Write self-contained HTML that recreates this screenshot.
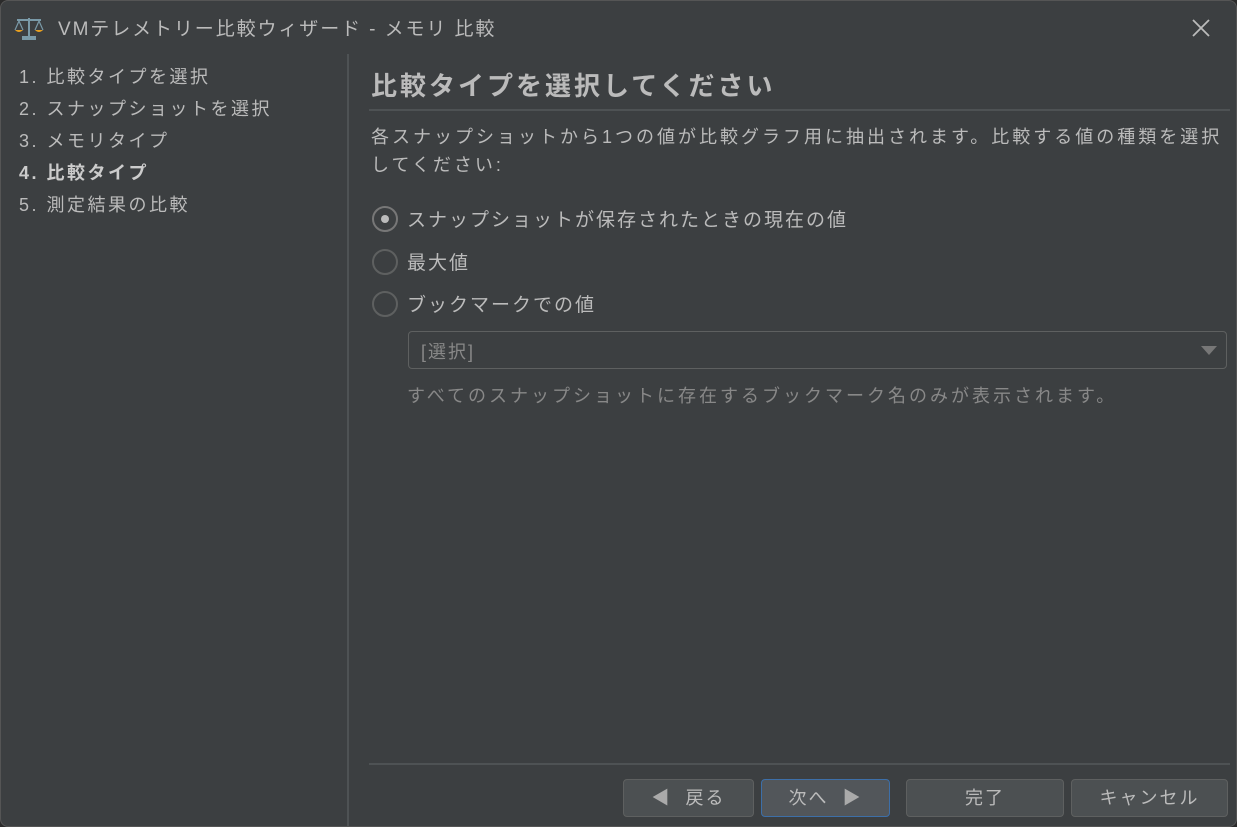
<!DOCTYPE html><html><head><meta charset="utf-8"><style>
*{margin:0;padding:0;box-sizing:border-box}
body{width:1237px;height:827px;background:#2b2b2b;font-family:"Liberation Sans","Noto Sans CJK JP",sans-serif;color:#bbbbbb;overflow:hidden}
.win{position:absolute;left:0;top:0;width:1237px;height:827px;background:#3c3f41;border:1px solid #555;border-radius:8px;overflow:hidden}
.a{position:absolute;white-space:nowrap}
.side{font-size:18px;color:#bbb;letter-spacing:2.5px}
.radio{position:absolute;left:371px;width:26px;height:26px;border-radius:50%;border:2px solid #5e6060;background:#3c3f41}
.btn{position:absolute;top:778px;height:38px;border:1px solid #5e6060;border-radius:4px;background:#4c5052;color:#bbb;font-size:18px;text-align:center;line-height:36px;letter-spacing:2px}
</style></head><body><div class="win">
<svg class="a" style="left:13px;top:14px" width="30" height="26" viewBox="0 0 30 26"><rect x="14" y="3" width="2" height="18" fill="#7a9aa8"/><rect x="3" y="4" width="24" height="2" fill="#7a9aa8"/><path d="M5 6 L1 15 M5 6 L9 15 M25 6 L21 15 M25 6 L29 15" stroke="#7a9aa8" stroke-width="1.2" fill="none"/><path d="M1 15 H9 Q5 19 1 15Z M21 15 H29 Q25 19 21 15Z" fill="#e8a020"/><rect x="8" y="21" width="14" height="4" fill="#7a9aa8"/></svg>
<div class="a" style="left:57px;top:13px;font-size:19px;color:#bbb;letter-spacing:1.9px">VMテレメトリー比較ウィザード - メモリ 比較</div>
<svg class="a" style="left:1190px;top:17px" width="20" height="20"><path d="M2 2L18 18M18 2L2 18" stroke="#bbb" stroke-width="1.8"/></svg>
<div class="a side" style="left:18px;top:62px">1. 比較タイプを選択</div>
<div class="a side" style="left:18px;top:94px">2. スナップショットを選択</div>
<div class="a side" style="left:18px;top:126px">3. メモリタイプ</div>
<div class="a side" style="left:18px;top:158px;font-weight:bold;color:#ccc">4. 比較タイプ</div>
<div class="a side" style="left:18px;top:190px">5. 測定結果の比較</div>
<div class="a" style="left:346px;top:53px;width:2px;height:780px;background:#4e5254"></div>
<div class="a" style="left:370px;top:65px;font-size:26px;font-weight:bold;color:#bbb;letter-spacing:3px">比較タイプを選択してください</div>
<div class="a" style="left:368px;top:108px;width:861px;height:2px;background:#4e5254"></div>
<div class="a" style="left:370px;top:122px;font-size:18px;line-height:28px;letter-spacing:3px">各スナップショットから1つの値が比較グラフ用に抽出されます。比較する値の種類を選択<br>してください:</div>
<div class="radio" style="top:205px;border-color:#777"><div style="position:absolute;left:7px;top:7px;width:8px;height:8px;border-radius:50%;background:#bbb"></div></div>
<div class="a" style="left:406px;top:204px;font-size:19px;letter-spacing:2px">スナップショットが保存されたときの現在の値</div>
<div class="radio" style="top:248px"></div>
<div class="a" style="left:406px;top:247px;font-size:19px;letter-spacing:2px">最大値</div>
<div class="radio" style="top:290px"></div>
<div class="a" style="left:406px;top:289px;font-size:19px;letter-spacing:2px">ブックマークでの値</div>
<div class="a" style="left:407px;top:330px;width:819px;height:38px;border:1px solid #5e6060;border-radius:4px;background:#3c3f41"></div>
<div class="a" style="left:420px;top:337px;font-size:18px;color:#888;letter-spacing:2px">[選択]</div>
<svg class="a" style="left:1200px;top:345px" width="16" height="10"><path d="M0 0H16L8 9Z" fill="#777"/></svg>
<div class="a" style="left:406px;top:381px;font-size:18px;color:#888;letter-spacing:3px">すべてのスナップショットに存在するブックマーク名のみが表示されます。</div>
<div class="a" style="left:368px;top:762px;width:861px;height:2px;background:#4e5254"></div>
<div class="btn" style="left:622px;width:131px"><span style="color:#aaa">◀</span>&nbsp; 戻る</div>
<div class="btn" style="left:760px;width:129px;border-color:#3d6fa8;background:#52565a">次へ &nbsp;<span style="color:#aaa">▶</span></div>
<div class="btn" style="left:905px;width:158px">完了</div>
<div class="btn" style="left:1070px;width:157px">キャンセル</div>
</div></body></html>
